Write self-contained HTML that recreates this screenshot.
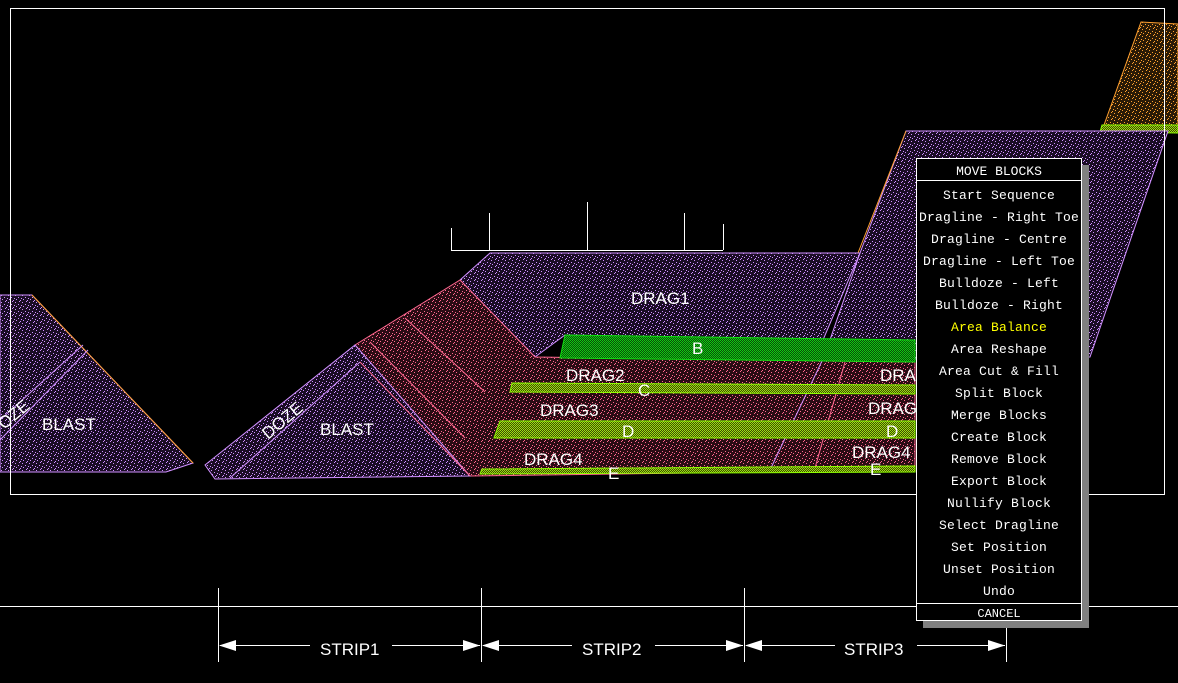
<!DOCTYPE html>
<html><head><meta charset="utf-8"><style>
html,body{margin:0;padding:0;background:#000;width:1178px;height:683px;overflow:hidden}
svg{position:absolute;left:0;top:0}
.tf{font-family:"Liberation Sans",sans-serif;fill:#fff;font-size:17px}
#menu{position:absolute;left:916px;top:158px;width:164px;height:461px;border:1px solid #fff;background:#000;font-family:"Liberation Mono",monospace;font-size:13px;color:#fff;box-shadow:7px 7px 0 #808080}
#menu .h{height:21px;border-bottom:1px solid #fff;text-align:center;line-height:26px}
#menu .i{height:22px;line-height:22px;text-align:center;white-space:nowrap;letter-spacing:0.2px}
#menu .c{position:absolute;left:0;right:0;top:444px;border-top:1px solid #fff;text-align:center;line-height:20px;font-size:12px}
</style></head><body>
<svg width="1178" height="683" viewBox="0 0 1178 683">
<defs>
<pattern id="pp" width="7" height="7" patternUnits="userSpaceOnUse"><rect width="7" height="7" fill="#1a0d24"/><g fill="#d090ff"><rect x="1" y="1" width="1" height="1"/><rect x="4" y="3" width="1" height="1"/><rect x="2" y="5" width="1" height="1"/><rect x="6" y="6" width="1" height="1"/><rect x="5" y="0" width="1" height="1"/><rect x="0" y="4" width="1" height="1"/></g></pattern>
<pattern id="pk" width="7" height="7" patternUnits="userSpaceOnUse"><rect width="7" height="7" fill="#2a0c14"/><g fill="#ff6890"><rect x="1" y="1" width="1" height="1"/><rect x="4" y="3" width="1" height="1"/><rect x="2" y="5" width="1" height="1"/><rect x="6" y="6" width="1" height="1"/><rect x="5" y="0" width="1" height="1"/><rect x="0" y="4" width="1" height="1"/></g></pattern>
<pattern id="po" width="7" height="7" patternUnits="userSpaceOnUse"><rect width="7" height="7" fill="#2a1a06"/><g fill="#ffa030"><rect x="1" y="1" width="1" height="1"/><rect x="4" y="3" width="1" height="1"/><rect x="2" y="5" width="1" height="1"/><rect x="6" y="6" width="1" height="1"/><rect x="5" y="0" width="1" height="1"/><rect x="0" y="4" width="1" height="1"/></g></pattern>
<pattern id="pg" width="2" height="2" patternUnits="userSpaceOnUse"><rect width="2" height="2" fill="#0a4a0a"/><rect width="1" height="1" fill="#10d010"/><rect x="1" y="1" width="1" height="1" fill="#10d010"/></pattern>
<pattern id="py" width="2" height="2" patternUnits="userSpaceOnUse"><rect width="2" height="2" fill="#3a4a05"/><rect width="1" height="1" fill="#a0e010"/><rect x="1" y="1" width="1" height="1" fill="#a0e010"/></pattern>
</defs>
<polygon points="1104,125 1141,22 1178,24 1178,125" fill="url(#po)" stroke="#ffa030"/>
<polygon points="1102,125 1178,125 1178,133 1100,132" fill="url(#py)" stroke="#90ff00"/>
<polygon points="0,295 32,295 193,463 166,472 0,472" fill="url(#pp)" stroke="#d090ff"/>
<line x1="32" y1="295" x2="193" y2="463" stroke="#ffa030"/>
<line x1="0" y1="420" x2="83" y2="345" stroke="#d090ff"/>
<line x1="0" y1="440" x2="88" y2="350" stroke="#d090ff"/>
<polygon points="906,131 1168,131 1090,357 823,360 860,253" fill="url(#pp)" stroke="#d090ff"/>
<line x1="906" y1="131" x2="858" y2="253" stroke="#ffa030"/>
<polygon points="460,280 490,253 860,253 823,340 565,335 535,357" fill="url(#pp)" stroke="#d090ff"/>
<polygon points="355,345 460,280 535,357 915,362 915,470 470,476 355,352" fill="url(#pk)" stroke="#ff6890"/>
<line x1="405" y1="318" x2="485" y2="392" stroke="#ff6890"/>
<line x1="370" y1="342" x2="465" y2="438" stroke="#ff6890"/>
<line x1="845" y1="362" x2="815" y2="468" stroke="#ff6890"/>
<line x1="832" y1="340" x2="770" y2="470" stroke="#d090ff"/>
<polygon points="205,465 355,345 470,476 215,479" fill="url(#pp)" stroke="#d090ff"/>
<line x1="230" y1="478" x2="360" y2="362" stroke="#d090ff"/>
<line x1="360" y1="362" x2="470" y2="476" stroke="#ff6890"/>
<polygon points="565,335 915,340 915,362 560,358" fill="url(#pg)" stroke="#10e010"/>
<polygon points="512,383 915,385 915,394 510,392" fill="url(#py)" stroke="#90ff00"/>
<polygon points="500,421 915,421 915,438 494,438" fill="url(#py)" stroke="#90ff00"/>
<polygon points="482,469 915,466 915,472 480,474" fill="url(#py)" stroke="#90ff00"/>
<rect x="10.5" y="8.5" width="1154" height="486" fill="none" stroke="#fff"/>
<line x1="0" y1="606.5" x2="1178" y2="606.5" stroke="#fff"/>
<g stroke="#fff"><line x1="451" y1="250.5" x2="723" y2="250.5"/><line x1="451.5" y1="228" x2="451.5" y2="250"/><line x1="489.5" y1="213" x2="489.5" y2="250"/><line x1="587.5" y1="202" x2="587.5" y2="250"/><line x1="684.5" y1="213" x2="684.5" y2="250"/><line x1="723.5" y1="224" x2="723.5" y2="250"/></g>
<g stroke="#fff"><line x1="218.5" y1="588" x2="218.5" y2="662"/><line x1="481.5" y1="588" x2="481.5" y2="662"/><line x1="744.5" y1="588" x2="744.5" y2="662"/><line x1="1006.5" y1="620" x2="1006.5" y2="662"/>
<line x1="220" y1="645.5" x2="310" y2="645.5"/><line x1="392" y1="645.5" x2="480" y2="645.5"/><line x1="483" y1="645.5" x2="572" y2="645.5"/><line x1="655" y1="645.5" x2="743" y2="645.5"/><line x1="746" y1="645.5" x2="835" y2="645.5"/><line x1="917" y1="645.5" x2="1005" y2="645.5"/></g>
<g fill="#fff"><polygon points="219,645.5 236,640 236,651"/><polygon points="480,645.5 463,640 463,651"/><polygon points="482,645.5 499,640 499,651"/><polygon points="743,645.5 726,640 726,651"/><polygon points="745,645.5 762,640 762,651"/><polygon points="1005,645.5 988,640 988,651"/></g>
<g class="tf">
<text x="320" y="655">STRIP1</text><text x="582" y="655">STRIP2</text><text x="844" y="655">STRIP3</text>
<text x="42" y="430">BLAST</text><text x="320" y="435">BLAST</text>
<text x="631" y="304">DRAG1</text><text x="692" y="354">B</text>
<text x="566" y="381">DRAG2</text><text x="638" y="396">C</text>
<text x="540" y="416">DRAG3</text><text x="622" y="437">D</text>
<text x="524" y="465">DRAG4</text><text x="608" y="479">E</text>
<text x="880" y="381">DRA</text><text x="868" y="414">DRAG</text><text x="886" y="437">D</text>
<text x="852" y="458">DRAG4</text><text x="870" y="475">E</text>
<text transform="translate(268,440) rotate(-40)">DOZE</text>
<text transform="translate(4,430) rotate(-40)">OZE</text>
</g>
</svg>
<div id="menu">
<div class="h">MOVE BLOCKS</div>
<div style="height:4px"></div>
<div class="i">Start Sequence</div>
<div class="i">Dragline - Right Toe</div>
<div class="i">Dragline - Centre</div>
<div class="i">Dragline - Left Toe</div>
<div class="i">Bulldoze - Left</div>
<div class="i">Bulldoze - Right</div>
<div class="i" style="color:#ffff00">Area Balance</div>
<div class="i">Area Reshape</div>
<div class="i">Area Cut &amp; Fill</div>
<div class="i">Split Block</div>
<div class="i">Merge Blocks</div>
<div class="i">Create Block</div>
<div class="i">Remove Block</div>
<div class="i">Export Block</div>
<div class="i">Nullify Block</div>
<div class="i">Select Dragline</div>
<div class="i">Set Position</div>
<div class="i">Unset Position</div>
<div class="i">Undo</div>
<div class="c">CANCEL</div>
</div>
</body></html>
